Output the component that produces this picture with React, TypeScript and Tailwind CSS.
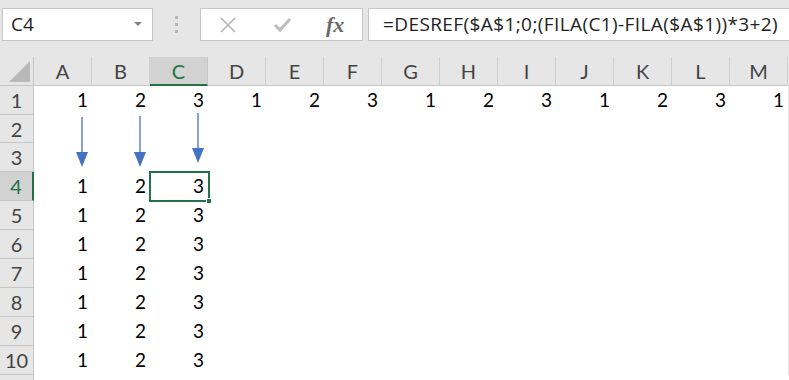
import React from "react";

const cols = ["A", "B", "C", "D", "E", "F", "G", "H", "I", "J", "K", "L", "M"];

// values for each row; blank string = empty cell
const row1 = ["1", "2", "3", "1", "2", "3", "1", "2", "3", "1", "2", "3", "1"];
const rowAbc = ["1", "2", "3", "", "", "", "", "", "", "", "", "", ""];
const empty = cols.map(() => "");

const rows = [
  { n: 1, h: "h-[29px]", v: row1 },
  { n: 2, h: "h-[28px]", v: empty },
  { n: 3, h: "h-[29px]", v: empty },
  { n: 4, h: "h-[29px]", v: rowAbc },
  { n: 5, h: "h-[29px]", v: rowAbc },
  { n: 6, h: "h-[29px]", v: rowAbc },
  { n: 7, h: "h-[29px]", v: rowAbc },
  { n: 8, h: "h-[29px]", v: rowAbc },
  { n: 9, h: "h-[29px]", v: rowAbc },
  { n: 10, h: "h-[29px]", v: rowAbc },
];

const FormulaBar = () => (
  <div className="flex items-center pt-[8px] h-[41px]">
    <div className="ml-[2px] w-[151px] h-[33px] bg-white border border-[#c6c6c6] flex items-center justify-between pl-[8px] pr-[10px]">
      <span className="text-[19px] text-[#222] leading-none" style={{ fontFamily: "'Open Sans', sans-serif" }}>
        C4
      </span>
      <svg width="8" height="5" viewBox="0 0 8 5">
        <path d="M0 0 L8 0 L4 4 Z" fill="#808080" />
      </svg>
    </div>
    <div className="w-[47px] flex flex-col items-center gap-[4px]">
      <span className="w-[3px] h-[3px] bg-[#b4b4b4]"></span>
      <span className="w-[3px] h-[3px] bg-[#b4b4b4]"></span>
      <span className="w-[3px] h-[3px] bg-[#b4b4b4]"></span>
    </div>
    <div className="w-[163px] h-[33px] bg-white border border-[#c6c6c6] flex items-center">
      <svg className="ml-[18px]" width="18" height="18" viewBox="0 0 18 18">
        <path d="M2 2 L16 16 M16 2 L2 16" stroke="#b4b4b4" strokeWidth="1.6" />
      </svg>
      <svg className="ml-[36px]" width="20" height="18" viewBox="0 0 20 18">
        <path d="M2 9 L7 14 L17 3" stroke="#bdbdbd" strokeWidth="3" fill="none" />
      </svg>
      <span
        className="ml-[33px] text-[22px] italic font-bold text-[#6a6a6a] leading-none"
        style={{ fontFamily: "'Liberation Serif', serif" }}
      >
        fx
      </span>
    </div>
    <div className="ml-[5px] flex-1 h-[33px] bg-white border border-[#c6c6c6] border-r-0 flex items-center pl-[14px]">
      <span
        className="text-[19px] tracking-[0.4px] text-[#222] leading-none whitespace-nowrap"
        style={{ fontFamily: "'Open Sans', sans-serif" }}
      >
        =DESREF($A$1;0;(FILA(C1)-FILA($A$1))*3+2)
      </span>
    </div>
  </div>
);

const Grid = () => (
  <div className="relative mt-[16px]">
    {/* column headers */}
    <div className="flex h-[29px] bg-[#e6e6e6]">
      <div className="w-[34px] border-r border-b border-[#c6c6c6] flex items-end justify-end pr-[3px] pb-[3px]">
        <svg width="21" height="21" viewBox="0 0 21 21">
          <path d="M21 0 L21 21 L0 21 Z" fill="#b9b9b9" />
        </svg>
      </div>
      {cols.map((c) =>
        c === "C" ? (
          <div
            key={c}
            className="w-[58px] shrink-0 bg-[#d2d2d2] border-r border-[#c6c6c6] border-b-2 border-b-[#217346] flex items-center justify-center text-[20px] text-[#217346]"
          >
            {c}
          </div>
        ) : (
          <div
            key={c}
            className="w-[58px] shrink-0 border-r border-b border-[#d0d0d0] border-b-[#c6c6c6] flex items-center justify-center text-[20px] text-[#444]"
          >
            {c}
          </div>
        )
      )}
    </div>

    {rows.map((r) => (
      <div key={r.n} className={`flex ${r.h}`}>
        {r.n === 4 ? (
          <div className="w-[34px] shrink-0 bg-[#d2d2d2] border-b border-[#c6c6c6] border-r-2 border-r-[#217346] flex items-center justify-center text-[20px] text-[#217346]">
            {r.n}
          </div>
        ) : (
          <div className="w-[34px] shrink-0 bg-[#e6e6e6] border-b border-r border-[#c6c6c6] flex items-center justify-center text-[20px] text-[#444]">
            {r.n}
          </div>
        )}
        {r.v.map((v, i) => (
          <div
            key={i}
            className="relative w-[58px] shrink-0 bg-white flex items-center justify-end pr-[4px] text-[19px] text-black"
          >
            {v}
            {r.n === 4 && i === 2 && (
              <div className="absolute z-10 -left-[1px] -top-[1px] w-[61px] h-[31px] border-2 border-[#217346]">
                <span className="absolute -right-[4px] -bottom-[4px] w-[6px] h-[6px] bg-[#217346] border border-white"></span>
              </div>
            )}
          </div>
        ))}
      </div>
    ))}

    {/* row 11, only its top edge shows */}
    <div className="flex h-[10px]">
      <div className="w-[34px] shrink-0 bg-[#e6e6e6] border-r border-[#c6c6c6]"></div>
      <div className="flex-1 bg-white"></div>
    </div>

    {/* arrows drawn over the sheet */}
    <svg className="absolute left-0 top-0 pointer-events-none" width="789" height="130">
      {[
        { x: 82, y1: 60, y2: 100 },
        { x: 140, y1: 59, y2: 100 },
        { x: 198, y1: 56, y2: 96 },
      ].map((a, i) => (
        <g key={i}>
          <line x1={a.x} y1={a.y1} x2={a.x} y2={a.y2} stroke="#4472c4" strokeWidth="1.3" />
          <path d={`M${a.x - 6} ${a.y2 - 5} L${a.x + 6} ${a.y2 - 5} L${a.x} ${a.y2 + 10} Z`} fill="#4472c4" />
        </g>
      ))}
    </svg>
  </div>
);

export default function App() {
  return (
    <div
      className="w-[789px] h-[380px] overflow-hidden bg-[#e6e6e6]"
      style={{ fontFamily: "Lato, 'Open Sans', sans-serif" }}
    >
      <FormulaBar />
      <Grid />
    </div>
  );
}
